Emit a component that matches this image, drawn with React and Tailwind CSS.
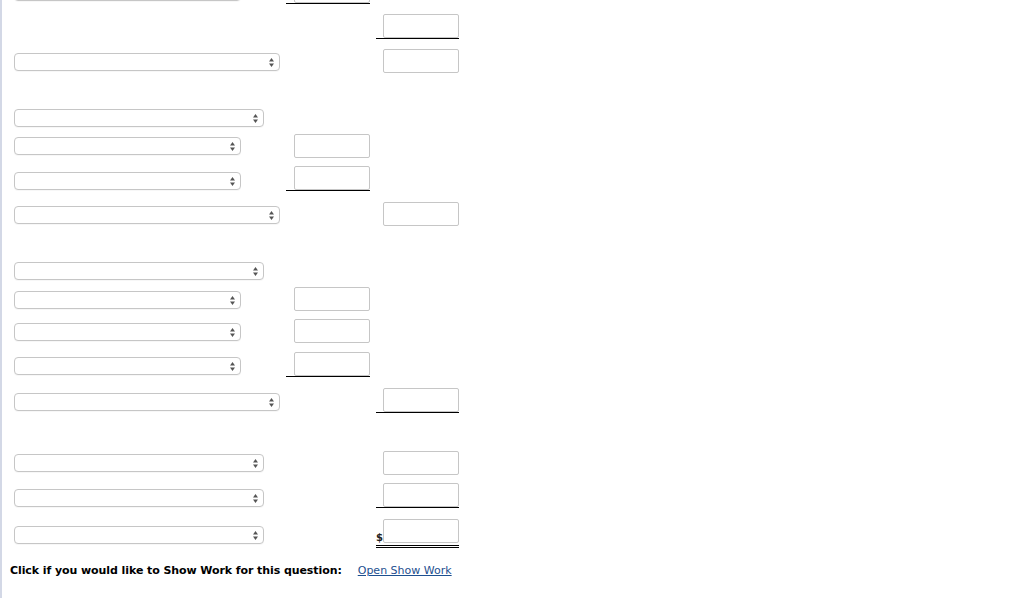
import React from "react";

// one entry per table row; margins/offsets taken from the worksheet layout
const rows = [
  { mt: "-mt-[21px]", sel: "w-[227px]", selMt: "mt-[4px]", c1: true, c1Line: true },
  { mt: "mt-[10px]", c2: true, c2Line: true },
  { mt: "mt-[10px]", sel: "w-[266px]", selMt: "mt-[4px]", c2: true },
  { mt: "mt-[36px]", sel: "w-[250px]", selMt: "mt-0" },
  { mt: "mt-[7px]", sel: "w-[227px]", selMt: "mt-[3px]", c1: true },
  { mt: "mt-[8px]", sel: "w-[227px]", selMt: "mt-[6px]", c1: true, c1Line: true },
  { mt: "mt-[11px]", sel: "w-[266px]", selMt: "mt-[4px]", c2: true },
  { mt: "mt-[36px]", sel: "w-[250px]", selMt: "mt-0" },
  { mt: "mt-[7px]", sel: "w-[227px]", selMt: "mt-[4px]", c1: true },
  { mt: "mt-[8px]", sel: "w-[227px]", selMt: "mt-[4px]", c1: true },
  { mt: "mt-[9px]", sel: "w-[227px]", selMt: "mt-[5px]", c1: true, c1Line: true },
  { mt: "mt-[11px]", sel: "w-[266px]", selMt: "mt-[5px]", c2: true, c2Line: true },
  { mt: "mt-[38px]", sel: "w-[250px]", selMt: "mt-[3px]", c2: true },
  { mt: "mt-[8px]", sel: "w-[250px]", selMt: "mt-[6px]", c2: true, c2Line: true },
  { mt: "mt-[11px]", sel: "w-[250px]", selMt: "mt-[7px]", c2: true, total: true },
];

const Arrows = () => (
  <svg width="5" height="9" viewBox="0 0 5 9" className="block">
    <path d="M2.5 0 L5 3.5 L0 3.5 Z" fill="#555" />
    <path d="M0 5.5 L5 5.5 L2.5 9 Z" fill="#555" />
  </svg>
);

const Select = ({ width, mt }) => (
  <div
    className={`${width} ${mt} h-[18px] rounded-[4px] border border-[#c6c6c6] bg-white flex items-center justify-end pr-[5px] shadow-[0_1px_0_rgba(0,0,0,0.03)]`}
  >
    <Arrows />
  </div>
);

const Box = () => (
  <div className="w-[76px] h-[24px] border border-[#c6c6c6] rounded-[2px] bg-white" />
);

const App = () => {
  return (
    <div className="h-[598px] w-[1024px] overflow-hidden bg-white border-l-2 border-[#d3d8e6] font-['DejaVu_Sans',Verdana,sans-serif]">
      {rows.map((r, i) => (
        <div key={i} className={`${r.mt} flex items-start pl-[12px]`}>
          <div className="w-[272px] shrink-0">
            {r.sel && <Select width={r.sel} mt={r.selMt} />}
          </div>
          <div className={`w-[84px] shrink-0 pl-[8px] ${r.c1Line ? "border-b border-black" : ""}`}>
            {r.c1 && <Box />}
          </div>
          <div
            className={`w-[83px] ml-[6px] shrink-0 flex items-end ${
              r.c2Line ? "border-b border-black" : ""
            } ${r.total ? "border-b-[3px] border-double border-black pb-[2px]" : ""}`}
          >
            {r.c2 && (
              <>
                <span className="w-[7px] text-[10px] leading-none font-bold text-[#222]">
                  {r.total ? "$" : ""}
                </span>
                <Box />
              </>
            )}
          </div>
        </div>
      ))}

      <div className="mt-[16px] pl-[8px] flex items-center text-[11px] leading-[13px]">
        <span className="font-bold text-black tracking-[-0.08px]">
          Click if you would like to Show Work for this question:
        </span>
        <a href="#" className="ml-[16px] text-[#1d4f8f] underline">
          Open Show Work
        </a>
      </div>
    </div>
  );
};

export default App;
